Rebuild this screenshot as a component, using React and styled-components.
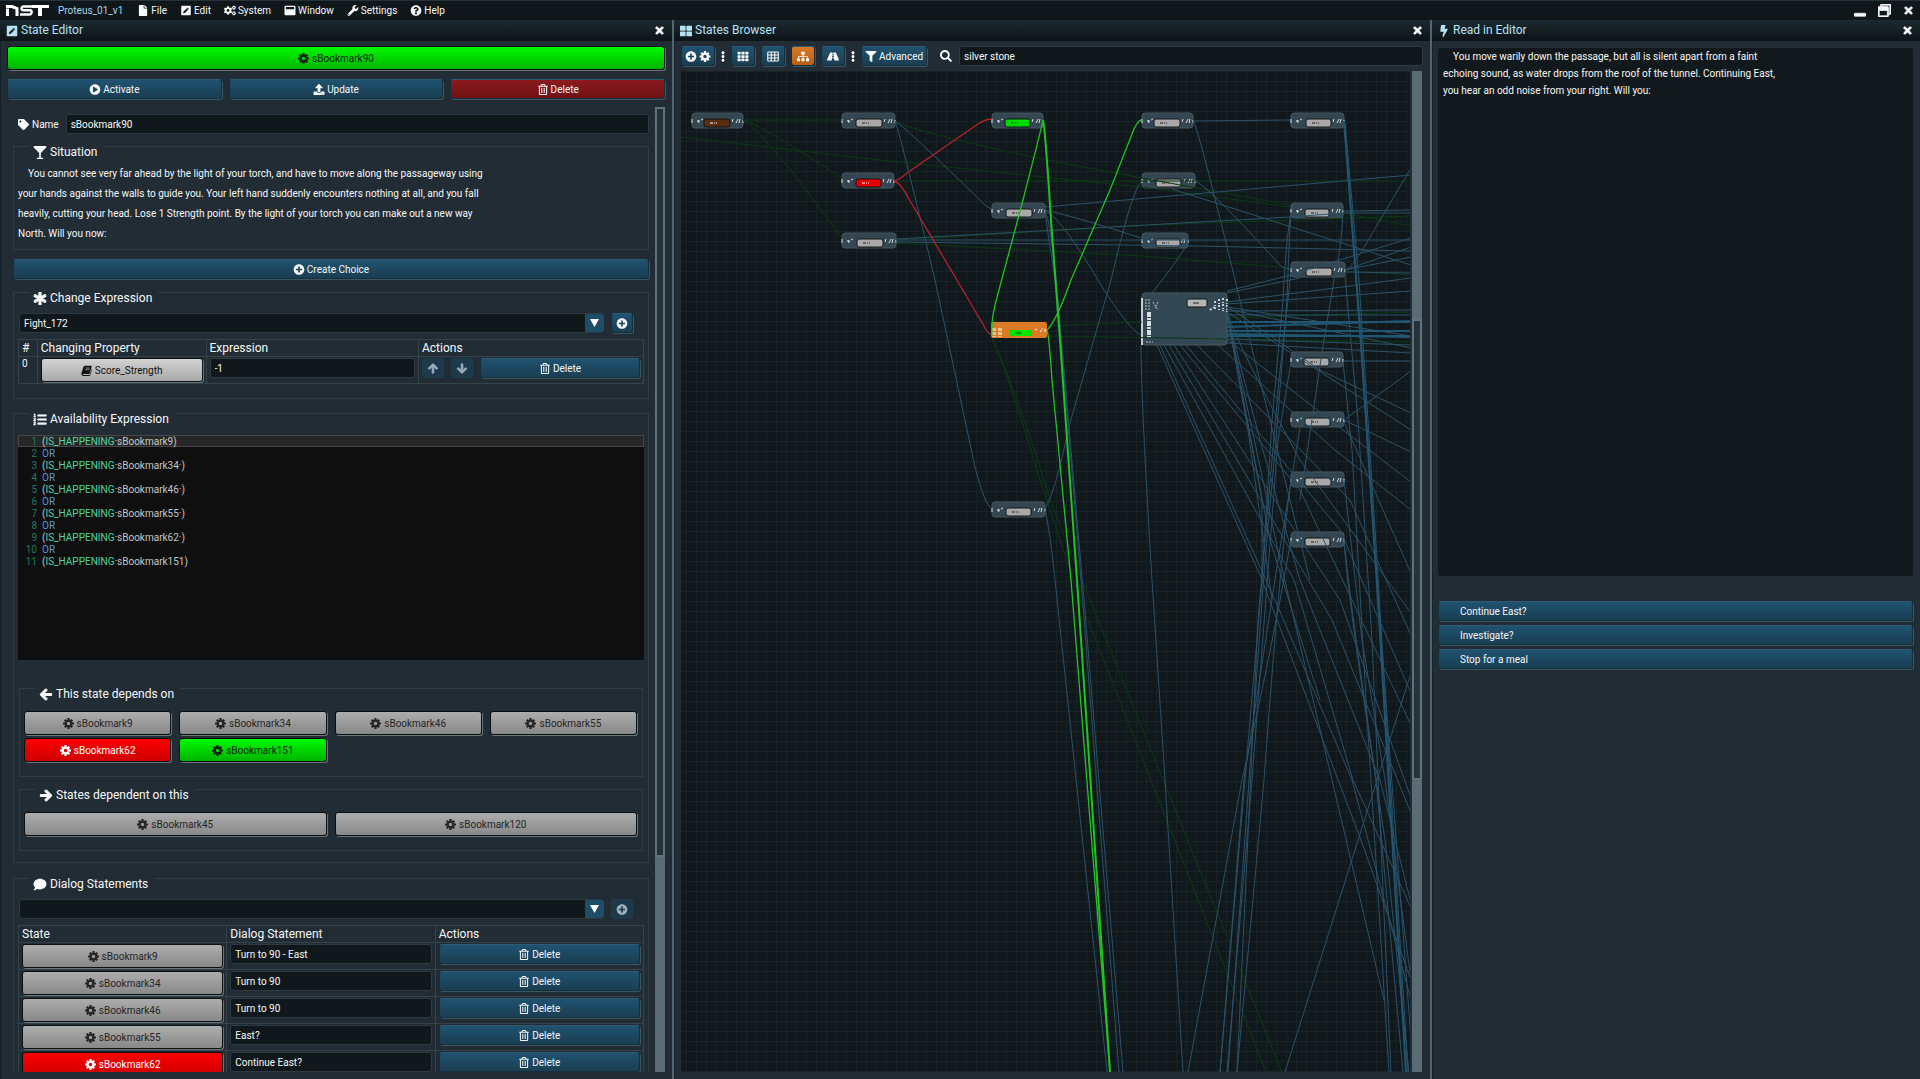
import styled, { createGlobalStyle, css } from 'styled-components'
import {
    FaFile, FaPenSquare, FaCogs, FaWindowMaximize, FaWrench, FaQuestionCircle,
    FaPlayCircle, FaUpload, FaRegTrashAlt, FaTag, FaGlassMartini, FaPlusCircle,
    FaAsterisk, FaArrowUp, FaArrowDown, FaListOl, FaArrowLeft, FaArrowRight,
    FaComment, FaThLarge, FaTh, FaSitemap, FaRoad, FaEllipsisV, FaFilter,
    FaSearch, FaTimes, FaBolt, FaWindowMinimize, FaRegWindowRestore,
} from 'react-icons/fa'

const GlobalStyle = createGlobalStyle`
    * {
        box-sizing: border-box;
    }

    body {
        margin: 0;
        background: #212c34;
        color: #f6f8f9;
        font-family: Roboto, "Liberation Sans", sans-serif;
        font-size: 10px;
    }

    button, input, select {
        font: inherit;
        color: inherit;
    }
`

const Screen = styled.div`
    display: flex;
    flex-direction: column;
    height: 100vh;
    overflow: hidden;
`

const MenuBar = styled.header`
    display: flex;
    align-items: center;
    height: 20px;
    padding: 0 6px;
    border-top: 1px solid #26323a;
    background: #10171b;
`

const ProjectName = styled.span`
    margin: 0 14px 0 9px;
    color: #a9d9ec;
`

const MenuItem = styled.button`
    display: flex;
    align-items: center;
    gap: 2px;
    padding: 0;
    margin-right: 13px;
    border: 0;
    background: none;

    svg {
        width: 12px;
        height: 11px;
    }
`

const WindowButtons = styled.div`
    display: flex;
    align-items: center;
    gap: 12px;
    margin-left: auto;
`

const IconButton = styled.button`
    display: flex;
    padding: 0;
    border: 0;
    background: none;
    font-size: ${p => p.$size || 11}px;
`

const Panels = styled.main`
    flex: 1;
    min-height: 0;
    display: grid;
    grid-template-columns: 672fr 758fr 490fr;
`

const Panel = styled.section`
    display: flex;
    flex-direction: column;
    min-width: 0;
    min-height: 0;
    border-left: ${p => (p.$first ? '0' : '2px solid #50656f')};
    box-shadow: inset 1px 0 0 #16212a;
`

const PanelTitle = styled.h2`
    display: flex;
    align-items: center;
    gap: 3px;
    height: 21px;
    margin: 0;
    padding: 0 7px 0 6px;
    background: linear-gradient(#1b2930, #0d1317);
    color: #b6e2f2;
    font-size: 12px;
    font-weight: 400;
    line-height: 21px;

    ${IconButton} {
        margin-left: auto;
        color: #fff;
    }
`

const PanelBody = styled.div`
    flex: 1;
    min-height: 0;
    display: flex;
    flex-direction: column;
    padding: 5px 7px 7px;
`

const tones = {
    blue: ['#1f5270', '#1b3e52', '#f6f8f9'],
    red: ['#8c1a1f', '#701216', '#f6f8f9'],
    orange: ['#d57a26', '#b85f12', '#fff'],
}

const Button = styled.button`
    flex: ${p => (p.$wide ? '1 1 0' : '0 0 auto')};
    display: flex;
    align-items: center;
    justify-content: ${p => (p.$left ? 'flex-start' : 'center')};
    gap: 2px;
    min-width: 22px;
    height: 20px;
    padding: 0 ${p => (p.$left ? 21 : 3)}px;
    border: 1px solid #14303f;
    border-top-color: #2d5b73;
    border-radius: 3px;
    background: linear-gradient(${p => tones[p.$tone || 'blue'][0]}, ${p => tones[p.$tone || 'blue'][1]});
    box-shadow: 1px 1px 0 #3b5563;
    color: ${p => tones[p.$tone || 'blue'][2]};

    svg {
        width: 12px;
        height: 11px;
    }

    &:disabled {
        color: #9db0ba;
        background: #1c3a4b;
        border-color: #1f3c4c;
        box-shadow: none;
    }
`

const stateTones = {
    grey: ['#adadad', '#888', '#262626'],
    light: ['#d2d2d2', '#a8a8a8', '#111'],
    green: ['#00fa00', '#00b400', '#0a260a'],
    red: ['#fb0000', '#cf0000', '#fff'],
}

const StateButtonRoot = styled.button`
    display: flex;
    align-items: center;
    justify-content: center;
    gap: 3px;
    width: 100%;
    height: 24px;
    padding: 0;
    border: 1px solid #0c0f10;
    border-radius: 3px;
    background: linear-gradient(${p => stateTones[p.$tone][0]}, ${p => stateTones[p.$tone][1]});
    box-shadow: 1px 1px 0 #68757b;
    color: ${p => stateTones[p.$tone][2]};

    svg {
        width: 11px;
        height: 11px;
    }
`

const Row = styled.div`
    display: flex;
    align-items: center;
    gap: ${p => p.$gap || 7}px;
`

const ActionRow = styled(Row)`
    margin: 9px 0 8px;
`

const fieldBox = css`
    height: 20px;
    min-width: 0;
    padding: 0 4px;
    border: 1px solid #2c3a42;
    border-radius: 3px;
    background: #11181b;
    outline: 0;
`

const Input = styled.input`
    ${fieldBox}
    flex: 1;
    width: 100%;
    display: block;
`

const ScrollArea = styled.div`
    flex: 1;
    min-height: 0;
    display: flex;
`

const ScrollContent = styled.div`
    flex: 1;
    min-width: 0;
    overflow: hidden;
    padding: 7px 6px 0;
`

const ScrollTrack = styled.div`
    display: flex;
    flex-direction: column;
    width: 10px;
    margin-left: ${p => p.$gap || 0}px;
    background: #5a6b75;
`

const ScrollGap = styled.div`
    flex: ${p => p.$size};
`

const ScrollThumb = styled.div`
    flex: ${p => p.$size};
    border: 2px solid #5f727d;
    background: #25323a;
`

const NameLabel = styled.label`
    display: flex;
    align-items: center;
    gap: 3px;
    padding-left: 5px;

    svg {
        width: 11px;
        height: 11px;
    }
`

const Group = styled.fieldset`
    min-width: 0;
    margin: ${p => p.$top || 0}px 0 0;
    padding: 9px 4px ${p => p.$bottom || 5}px;
    border: 1px solid #303d44;
`

const InnerGroup = styled(Group)`
    margin: ${p => p.$top || 0}px 1px 0;
    padding-top: 11px;
`

const Legend = styled.legend`
    display: flex;
    align-items: center;
    gap: 3px;
    height: 24px;
    margin-left: 11px;
    padding: 12px 6px 0 4px;
    font-size: 12px;
    line-height: 12px;

    svg {
        width: 14px;
        height: 13px;
    }
`

const Story = styled.p`
    margin: ${p => (p.$page ? '0' : '-3px 0 0')};
    line-height: ${p => (p.$page ? 17 : 20)}px;
    text-indent: 10px;
`

const ComboRow = styled(Row)`
    padding: 0 11px 0 1px;
    margin-bottom: 6px;
`

const Combo = styled.div`
    flex: 1;
    display: flex;
    height: 20px;
    position: relative;
`

const Select = styled.select`
    ${fieldBox}
    flex: 1;
    appearance: none;
`

const ComboArrow = styled.span`
    position: absolute;
    top: 1px;
    right: 0;
    display: flex;
    align-items: center;
    justify-content: center;
    width: 19px;
    height: 18px;
    border-radius: 0 3px 3px 0;
    background: #1f4c66;
    pointer-events: none;
`

const Table = styled.table`
    width: 100%;
    table-layout: fixed;
    border-collapse: collapse;
    border: 1px solid #45525a;
`

const Th = styled.th`
    width: ${p => p.$width};
    height: 17px;
    padding: 0 3px;
    border: 1px solid #35424a;
    font-size: 12px;
    font-weight: 400;
    line-height: 15px;
    text-align: left;
`

const Td = styled.td`
    height: 27px;
    padding: 1px 3px;
    border: 1px solid #35424a;
    vertical-align: top;
`

const Code = styled.div`
    height: 225px;
    margin-top: 1px;
    background: #0f0f0f;
    color: #c3c7c8;
`

const CodeLine = styled.div`
    display: flex;
    gap: 5px;
    height: 12px;
    line-height: 13px;
    background: ${p => (p.$current ? '#272727' : 'none')};
    box-shadow: ${p => (p.$current ? 'inset 0 0 0 1px #474747' : 'none')};
`

const LineNumber = styled.span`
    width: 19px;
    color: #1f7b66;
    text-align: right;
`

const Keyword = styled.span`
    color: ${p => (p.$operator ? '#5b9bd5' : '#4fd6a4')};
`

const StateGrid = styled.div`
    display: grid;
    grid-template-columns: repeat(${p => p.$columns}, 1fr);
    gap: 3px 8px;
    padding-right: 1px;
`

const Toolbar = styled(Row)`
    margin-bottom: 5px;

    > svg {
        width: 4px;
        height: 11px;
    }

    ${Button} {
        min-width: 24px;
    }
`

const SearchLabel = styled.label`
    display: flex;
    margin: 0 1px 0 7px;
    font-size: 12px;
`

const GraphArea = styled(ScrollArea)`
    padding-right: 1px;
`

const Canvas = styled.div`
    flex: 1;
    min-width: 0;
    overflow: hidden;
    background-color: #11181c;
    background-image:
        linear-gradient(#192327 1px, transparent 1px),
        linear-gradient(90deg, #182126 1px, transparent 1px);
    background-size: 10px 10px;
    background-position: 5px 0;

    svg {
        display: block;
        width: 100%;
        height: 100%;
    }
`

const Page = styled.div`
    height: 528px;
    margin: 2px 0 25px -1px;
    padding: 0 5px;
    border-radius: 3px;
    background: #12191c;
`

const Choices = styled.div`
    display: flex;
    flex-direction: column;
    gap: 4px;
    margin-left: -1px;
`

const Logo = () => (
    <svg width="43" height="11" viewBox="0 0 43 11" fill="none" stroke="#fff" strokeWidth="3" aria-label="NST" role="img">
        <path d="M1.5 11V3.5M0 1.5l6 0 5 2V11" />
        <path d="M27 1.500H17.500c-2 0-3 3.800-.5 3.800H24c3 0 1.500 4.200-.5 4.200H14" strokeWidth="2.400" />
        <path d="M26 1.500H43" />
        <path d="M34 2V11" strokeWidth="4" />
    </svg>
)

const Gear = () => (
    <svg viewBox="0 0 16 16" fill="none" stroke="currentColor">
        <circle cx="8" cy="8" r="4.200" strokeWidth="3.400" />
        <path strokeWidth="3.200" d="M8 0v4M8 12v4M0 8h4M12 8h4M2.500 2.500l2.500 2.500M11 11l2.500 2.500M13.500 2.500L11 5M5 11l-2.500 2.500" />
    </svg>
)

const GridIcon = () => (
    <svg viewBox="0 0 16 14" fill="none" stroke="currentColor" strokeWidth="1.500">
        <rect x="1" y="1" width="14" height="12" rx="1" />
        <path d="M1 5h14M1 9h14M5.700 1v12M10.300 1v12" />
    </svg>
)

const BookIcon = () => (
    <svg viewBox="0 0 16 16" fill="currentColor">
        <path d="M6 1h8.500q1.500 0 1 1.600L12.700 12q-.4 1.200-1.700 1.200H3.200q-1 0-.8.900.2.600 1 .6h8.200q.9 0 1.200-.8L15.800 5q.4 1 .1 2l-2.300 7.500Q13.100 16 11.600 16H3.400Q.9 16 .5 13.500q-.1-.8.1-1.600L3.600 2.700Q4.200 1 6 1z" />
        <path d="M6.800 4.500h6M6 7h6" stroke="#c4c4c4" />
    </svg>
)

const StateButton = ({ name, tone = 'grey', icon = <Gear /> }) => (
    <StateButtonRoot $tone={tone}>{icon}{name}</StateButtonRoot>
)

const Dropdown = ({ label, value, disabled }) => (
    <ComboRow>
        <Combo>
            <Select aria-label={label} defaultValue={value}>
                <option>{value}</option>
            </Select>
            <ComboArrow>
                <svg width="9" height="8" viewBox="0 0 9 8" fill="#fff"><path d="M0 0h9L4.500 8z" /></svg>
            </ComboArrow>
        </Combo>
        <Button aria-label={`Add ${label}`} disabled={disabled}><FaPlusCircle /></Button>
    </ComboRow>
)

const availability = [9, 34, 46, 55, 62, 151]

const AvailabilityCode = () => (
    <Code>
        {availability.flatMap((id, i) => {
            const closing = i === 0 || id === 151 ? ')' : '·)'
            const line = (
                <CodeLine key={id} $current={i === 0}>
                    <LineNumber>{i * 2 + 1}</LineNumber>
                    <span>(<Keyword>IS_HAPPENING</Keyword>·sBookmark{id}{closing}</span>
                </CodeLine>
            )
            if (i === 0) return [line]
            return [
                <CodeLine key={`or${id}`}>
                    <LineNumber>{i * 2}</LineNumber>
                    <Keyword $operator>OR</Keyword>
                </CodeLine>,
                line,
            ]
        })}
    </Code>
)

const dependsOn = [
    { name: 'sBookmark9' },
    { name: 'sBookmark34' },
    { name: 'sBookmark46' },
    { name: 'sBookmark55' },
    { name: 'sBookmark62', tone: 'red' },
    { name: 'sBookmark151', tone: 'green' },
]

const dialogs = [
    { name: 'sBookmark9', text: 'Turn to 90 - East' },
    { name: 'sBookmark34', text: 'Turn to 90' },
    { name: 'sBookmark46', text: 'Turn to 90' },
    { name: 'sBookmark55', text: 'East?' },
    { name: 'sBookmark62', text: 'Continue East?', tone: 'red' },
]

const StateEditor = () => (
    <Panel $first>
        <PanelTitle>
            <FaPenSquare />State Editor
            <IconButton aria-label="Close State Editor"><FaTimes strokeWidth="40" /></IconButton>
        </PanelTitle>
        <PanelBody>
            <StateButton name="sBookmark90" tone="green" />
            <ActionRow>
                <Button $wide><FaPlayCircle />Activate</Button>
                <Button $wide><FaUpload />Update</Button>
                <Button $wide $tone="red"><FaRegTrashAlt />Delete</Button>
            </ActionRow>
            <ScrollArea>
                <ScrollContent>
                    <Row>
                        <NameLabel htmlFor="state-name"><FaTag />Name</NameLabel>
                        <Input id="state-name" defaultValue="sBookmark90" />
                    </Row>
                    <Group>
                        <Legend><FaGlassMartini />Situation</Legend>
                        <Story>
                            You cannot see very far ahead by the light of your torch, and have to move along the passageway using<br />
                            your hands against the walls to guide you. Your left hand suddenly encounters nothing at all, and you fall<br />
                            heavily, cutting your head. Lose 1 Strength point. By the light of your torch you can make out a new way<br />
                            North. Will you now:
                        </Story>
                    </Group>
                    <ActionRow>
                        <Button $wide><FaPlusCircle />Create Choice</Button>
                    </ActionRow>
                    <Group $bottom={14} $top={-7}>
                        <Legend><FaAsterisk strokeWidth="40" />Change Expression</Legend>
                        <Dropdown label="change expression" value="Fight_172" />
                        <Table>
                            <thead>
                                <tr>
                                    <Th $width="3%">#</Th>
                                    <Th $width="27%">Changing Property</Th>
                                    <Th $width="34%">Expression</Th>
                                    <Th $width="36%">Actions</Th>
                                </tr>
                            </thead>
                            <tbody>
                                <tr>
                                    <Td>0</Td>
                                    <Td><StateButton name="Score_Strength" tone="light" icon={<BookIcon />} /></Td>
                                    <Td><Input aria-label="Expression" defaultValue="-1" /></Td>
                                    <Td>
                                        <Row>
                                            <Button disabled aria-label="Move up"><FaArrowUp strokeWidth="40" /></Button>
                                            <Button disabled aria-label="Move down"><FaArrowDown strokeWidth="40" /></Button>
                                            <Button $wide><FaRegTrashAlt />Delete</Button>
                                        </Row>
                                    </Td>
                                </tr>
                            </tbody>
                        </Table>
                    </Group>
                    <Group $top={2} $bottom={11}>
                        <Legend><FaListOl strokeWidth="20" />Availability Expression</Legend>
                        <AvailabilityCode />
                        <InnerGroup $top={16} $bottom={14}>
                            <Legend><FaArrowLeft strokeWidth="40" />This state depends on</Legend>
                            <StateGrid $columns={4}>
                                {dependsOn.map(state => <StateButton key={state.name} {...state} />)}
                            </StateGrid>
                        </InnerGroup>
                        <InnerGroup $bottom={14}>
                            <Legend><FaArrowRight strokeWidth="40" />States dependent on this</Legend>
                            <StateGrid $columns={2}>
                                <StateButton name="sBookmark45" />
                                <StateButton name="sBookmark120" />
                            </StateGrid>
                        </InnerGroup>
                    </Group>
                    <Group $top={3}>
                        <Legend><FaComment />Dialog Statements</Legend>
                        <Dropdown label="dialog statement" value="" disabled />
                        <Table>
                            <thead>
                                <tr>
                                    <Th>State</Th>
                                    <Th>Dialog Statement</Th>
                                    <Th>Actions</Th>
                                </tr>
                            </thead>
                            <tbody>
                                {dialogs.map(({ text, ...state }) => (
                                    <tr key={state.name}>
                                        <Td><StateButton {...state} /></Td>
                                        <Td><Input aria-label={`Statement for ${state.name}`} defaultValue={text} /></Td>
                                        <Td>
                                            <Row><Button $wide><FaRegTrashAlt />Delete</Button></Row>
                                        </Td>
                                    </tr>
                                ))}
                            </tbody>
                        </Table>
                    </Group>
                </ScrollContent>
                <ScrollTrack>
                    <ScrollThumb $size={748} />
                    <ScrollGap $size={216} />
                </ScrollTrack>
            </ScrollArea>
        </PanelBody>
    </Panel>
)

const nodeFill = {
    grey: '#a9a9a9',
    brown: '#5a2c10',
    red: '#e60000',
    green: '#00dc00',
}

// x, y, width, pill offset, pill width, pill tone
const nodes = [
    [692, 113, 51, 12, 26, 'brown'],
    [842, 113, 53, 14, 26, 'grey'],
    [842, 173, 52, 14, 25, 'red'],
    [842, 233, 54, 15, 26, 'grey'],
    [992, 113, 51, 13, 25, 'green'],
    [992, 203, 53, 14, 26, 'grey'],
    [992, 502, 53, 14, 25, 'grey'],
    [1142, 113, 51, 12, 26, 'grey'],
    [1142, 173, 53, 14, 25, 'grey'],
    [1142, 233, 46, 14, 24, 'grey'],
    [1291, 113, 53, 15, 25, 'grey'],
    [1291, 203, 52, 14, 24, 'grey'],
    [1291, 262, 54, 15, 26, 'grey'],
    [1291, 352, 52, 13, 25, 'grey'],
    [1291, 412, 53, 14, 25, 'grey'],
    [1291, 472, 53, 14, 26, 'grey'],
    [1291, 532, 53, 14, 25, 'grey'],
]

const blueEdges = [
    'M895 121Q901 123 985 205L991 209',
    'M895 121Q898 125 935 280L975 467Q985 505 991 508',
    'M1045 207L1411 175',
    'M1045 210Q1080 218 1141 238',
    'M1045 211Q1060 215 1104 290Q1130 330 1141 335',
    'M1045 211Q1050 220 1056 280L1081 580L1119 1072',
    'M1045 213L1058 300L1084 600L1123 1072',
    'M1045 510Q1050 530 1055 580L1107 1072',
    'M1045 509Q1056 490 1068 430L1111 280Q1132 190 1141 182',
    'M896 239L1290 217L1343 213H1411',
    'M896 240L1411 240',
    'M896 242L1200 246L1411 251',
    'M1188 241Q1186 250 1152 293',
    'M1193 121L1290 120',
    'M1193 121Q1198 125 1243 313L1310 580',
    'M1195 181Q1205 183 1282 267L1291 270',
    'M1172 189L1411 265',
    'M1343 211L1411 210',
    'M1343 214Q1340 260 1334 280L1322 352L1300 500',
    'M1345 270Q1353 268 1373 232L1411 168',
    'M1345 270L1411 247M1345 270L1411 257M1345 272L1411 273',
    'M1291 212Q1286 240 1283 300L1272 420L1262 580L1220 1072',
    'M1291 214Q1289 240 1287 300L1276 440L1265 560L1228 1072',
    'M1291 272L1279 380L1258 620L1237 1072',
    'M1291 362L1278 440L1252 780L1227 1072',
    'M1291 480Q1280 560 1264 780L1237 1072',
    'M1291 540Q1270 660 1242 780L1188 1072',
    'M1300 428L1278 560L1244 780L1220 1072',
    'M1344 121L1356 280L1374 540L1411 1040',
    'M1345 122L1359 280L1377 560L1408 1072',
    'M1345 275L1358 420L1372 640L1391 1072',
    'M1343 362L1352 450L1366 700L1389 1072',
    'M1344 540Q1348 600 1376 780L1403 1072',
    'M1344 541Q1352 620 1385 840L1409 1072',
    'M1344 480L1362 640L1385 780L1411 980',
    'M1343 361L1411 361',
    'M1344 420L1411 371M1344 420L1411 452M1344 422L1411 573',
    'M1141 345Q1141 400 1152 580L1165 780L1183 1072',
    'M1157 345L1260 575L1361 840L1411 980',
    'M1160 345L1275 600L1352 780L1411 1000',
    'M1164 345L1294 580L1353 780L1411 908',
    'M1169 345L1332 620L1411 813',
    'M1174 345L1340 600L1411 798',
    'M1180 345L1300 490L1411 725',
    'M1186 345L1340 530L1411 693',
    'M1197 345L1350 500L1411 635',
    'M1210 338L1335 450L1411 510',
    'M1215 330L1330 420L1411 482',
    'M1227 306L1320 370L1411 413',
    'M1227 312L1330 378L1411 430',
    'M1227 312Q1240 350 1300 460L1411 613',
    'M1227 312Q1236 350 1260 440L1300 580L1380 780L1411 903',
    'M1227 313L1262 500L1262 580M1227 314L1270 540L1320 700',
    'M1227 314L1250 420L1280 560L1384 1000',
    'M1227 314L1248 430L1272 600',
    'M1285 1072L1377 780L1411 673',
    'M1227 291L1291 275L1411 238M1227 293L1300 278',
    'M1227 302L1411 278M1227 304L1411 291',
    'M1227 307L1411 336M1227 309L1411 348M1227 343L1411 353',
    'M1227 311L1411 310M1227 315L1411 315M1227 339L1411 345',
]

const strongEdges = [
    'M1227 322H1411M1227 327L1411 321M1227 331H1411M1227 334L1411 337M1227 336H1411',
    'M1344 121L1361 340L1378 600L1406 1072',
]

const dimEdges = [
    'M743 120H842M743 120Q760 124 842 178M743 121Q760 126 842 238',
    'M681 137L880 160L1150 188L1290 207',
    'M895 122Q960 145 1142 178L1290 205',
    'M894 181H1411M896 240L1150 225L1411 216M896 243L1142 256L1291 268',
    'M1047 326L1142 322M1047 336L1411 342',
    'M992 338Q1010 380 1040 480L1080 600L1266 1072',
    'M992 338Q1020 400 1050 500L1090 600L1282 1072',
    'M1343 213L1411 226M1345 271L1411 275M1227 318L1411 312',
]

const PortMarks = ({ x, y }) => (
    <path
        d={`M${x} ${y + 6}v4M${x + 5} ${y + 8}h3M${x + 6} ${y + 7}l1 3M${x + 9} ${y + 7}l2 -1`}
        stroke="#d5dde1"
        fill="none"
    />
)

const GraphNode = ({ x, y, width, offset, pill, tone }) => (
    <g>
        <rect x={x} y={y} width={width} height="15" rx="3" fill="#334651" stroke="#46565f" />
        <PortMarks x={x} y={y} />
        <path d={`M${x + width - 10} ${y + 6}l-1 3M${x + width - 7} ${y + 10}l2 -4M${x + width - 4} ${y + 10}l1 -4M${x + width} ${y + 7}v3`} stroke="#d5dde1" fill="none" />
        <rect x={x + offset} y={y + 6} width={pill} height="8" rx="2" fill={nodeFill[tone]} stroke="#101416" />
        <path d={`M${x + offset + 6} ${y + 10}h7`} stroke={tone === 'red' || tone === 'brown' ? '#fff' : '#222'} strokeDasharray="3 1 1 1" />
    </g>
)

// the graph is panned so that its first column starts near the left edge
const StateGraph = () => (
    <svg aria-label="States graph" role="img">
        <g transform="translate(-681 -71)">
            {nodes.map(([x, y, width, offset, pill, tone]) => (
                <GraphNode key={`${x}-${y}`} {...{ x, y, width, offset, pill, tone }} />
            ))}
            <g>
                <rect x="1142" y="293" width="85" height="52" rx="3" fill="#334754" stroke="#4a5a64" />
                <path d="M1142 298v47" stroke="#c4ced4" strokeWidth="2" />
                <path d="M1149 312v27" stroke="#d5dde1" strokeWidth="4" strokeDasharray="5 1 2 1" />
                <path d="M1146 299v11M1149 299v11M1153 302l5 8M1158 302l-3 6M1146 342h7" stroke="#b4c0c7" strokeDasharray="2 1" fill="none" />
                <path d="M1210 310l4 -3M1215 301v9M1219 299v12M1223 298v13M1227 299v13" stroke="#c4ced4" strokeWidth="2" strokeDasharray="2 2 1 1" />
                <rect x="1187" y="299" width="20" height="8" rx="2" fill="#b5b5b5" stroke="#101416" />
                <path d="M1193 303h6" stroke="#222" />
            </g>
            <g>
                <rect x="991" y="322" width="56" height="16" rx="2" fill="#dc7a25" />
                <path d="M993 328v9M995 328v9M999 328v9M1001 328v9M1035 330l2 -1M1040 332l3 -4M1045 332v-4" stroke="#fff" strokeDasharray="3 1" />
                <rect x="1010" y="330" width="22" height="6" fill="#00e400" />
                <path d="M1015 333h6" stroke="#143" />
            </g>
            <g fill="none" stroke="#0b3a10">
                {dimEdges.map(d => <path key={d} d={d} />)}
            </g>
            <g fill="none" stroke="#2b5269">
                {blueEdges.map(d => <path key={d} d={d} />)}
            </g>
            <g fill="none" stroke="#205672" strokeWidth="2">
                {strongEdges.map(d => <path key={d} d={d} />)}
            </g>
            <g fill="none" stroke="#b5202e" strokeWidth="1.300">
                <path d="M894 181Q899 180 907 173L978 124Q986 119 991 119" />
                <path d="M894 181Q900 182 909 199L984 326Q988 334 991 334" />
            </g>
            <g fill="none" stroke="#22c322" strokeWidth="1.300">
                <path d="M1043 120Q1042 126 1023 200L995 305Q991 320 992 336" />
                <path d="M1047 330Q1056 322 1071 280L1110 190L1132 134Q1137 121 1141 120" />
                <path d="M1047 330Q1049 335 1052 380L1071 580L1110 1072" />
                <path d="M1043 120Q1045 126 1051 220L1060 340L1077 580L1110 1072" strokeWidth="2" />
            </g>
        </g>
    </svg>
)

const StatesBrowser = () => (
    <Panel>
        <PanelTitle>
            <FaThLarge />States Browser
            <IconButton aria-label="Close States Browser"><FaTimes strokeWidth="40" /></IconButton>
        </PanelTitle>
        <PanelBody>
            <Toolbar $gap={6}>
                <Button aria-label="Add state"><FaPlusCircle /><Gear /></Button>
                <FaEllipsisV />
                <Button aria-label="Tiles"><FaTh /></Button>
                <Button aria-label="Table"><GridIcon /></Button>
                <Button aria-label="Graph" $tone="orange"><FaSitemap /></Button>
                <Button aria-label="Paths"><FaRoad /></Button>
                <FaEllipsisV />
                <Button><FaFilter />Advanced</Button>
                <SearchLabel htmlFor="search" aria-label="Search"><FaSearch /></SearchLabel>
                <Input id="search" defaultValue="silver stone" />
            </Toolbar>
            <GraphArea>
                <Canvas><StateGraph /></Canvas>
                <ScrollTrack $gap={2}>
                    <ScrollGap $size={249} />
                    <ScrollThumb $size={459} />
                    <ScrollGap $size={293} />
                </ScrollTrack>
            </GraphArea>
        </PanelBody>
    </Panel>
)

const choices = ['Continue East?', 'Investigate?', 'Stop for a meal']

const Reader = () => (
    <Panel>
        <PanelTitle>
            <FaBolt />Read in Editor
            <IconButton aria-label="Close Read in Editor"><FaTimes strokeWidth="40" /></IconButton>
        </PanelTitle>
        <PanelBody>
            <Page>
                <Story $page>
                    You move warily down the passage, but all is silent apart from a faint<br />
                    echoing sound, as water drops from the roof of the tunnel. Continuing East,<br />
                    you hear an odd noise from your right. Will you:
                </Story>
            </Page>
            <Choices>
                {choices.map(choice => <Button key={choice} $left>{choice}</Button>)}
            </Choices>
        </PanelBody>
    </Panel>
)

const App = () => (
    <Screen>
        <GlobalStyle />
        <MenuBar>
            <Logo />
            <ProjectName>Proteus_01_v1</ProjectName>
            <MenuItem><FaFile />File</MenuItem>
            <MenuItem><FaPenSquare />Edit</MenuItem>
            <MenuItem><FaCogs />System</MenuItem>
            <MenuItem><FaWindowMaximize />Window</MenuItem>
            <MenuItem><FaWrench />Settings</MenuItem>
            <MenuItem><FaQuestionCircle />Help</MenuItem>
            <WindowButtons>
                <IconButton $size={12} aria-label="Minimize"><FaWindowMinimize strokeWidth="30" /></IconButton>
                <IconButton $size={13} aria-label="Restore"><FaRegWindowRestore strokeWidth="30" /></IconButton>
                <IconButton $size={11} aria-label="Close"><FaTimes strokeWidth="40" /></IconButton>
            </WindowButtons>
        </MenuBar>
        <Panels>
            <StateEditor />
            <StatesBrowser />
            <Reader />
        </Panels>
    </Screen>
)

export default App
